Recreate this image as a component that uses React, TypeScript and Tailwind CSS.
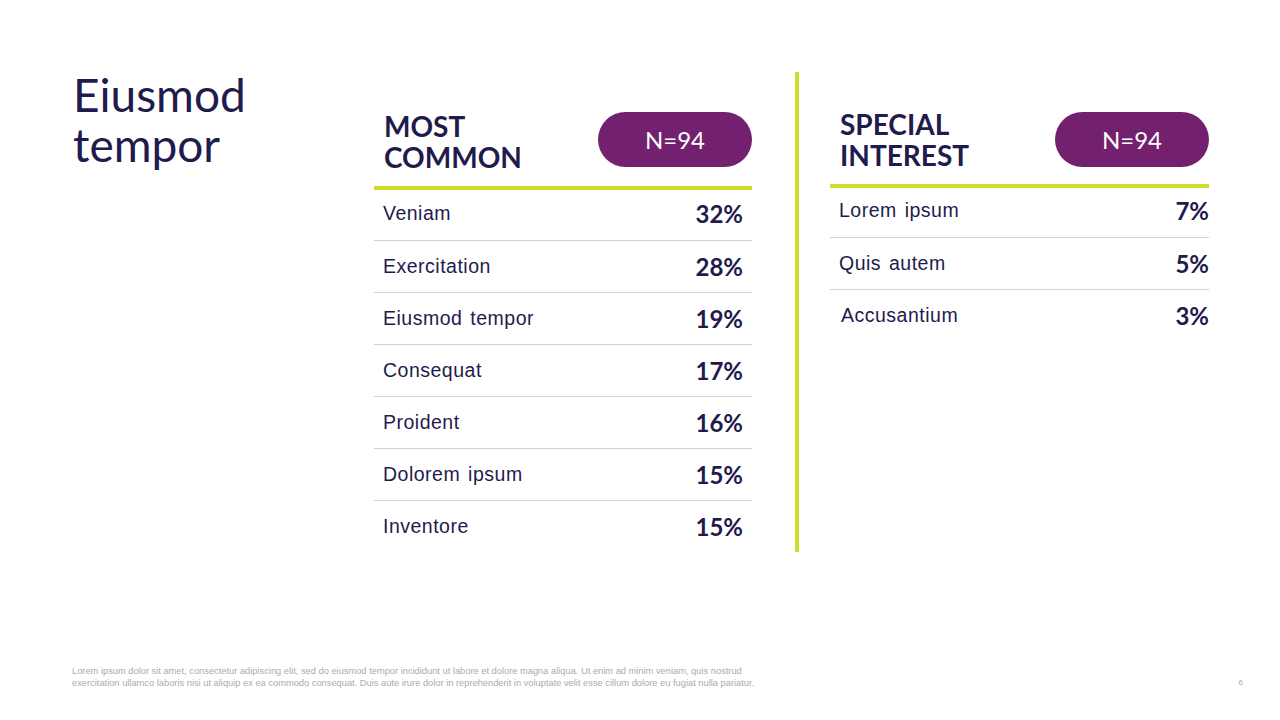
import React from 'react'

const mostCommon = [
  { label: 'Veniam', value: '32%' },
  { label: 'Exercitation', value: '28%' },
  { label: 'Eiusmod tempor', value: '19%' },
  { label: 'Consequat', value: '17%' },
  { label: 'Proident', value: '16%' },
  { label: 'Dolorem ipsum', value: '15%' },
  { label: 'Inventore', value: '15%' },
]

const specialInterest = [
  { label: 'Lorem ipsum', value: '7%' },
  { label: 'Quis autem', value: '5%' },
  { label: 'Accusantium', value: '3%', indent: true },
]

const heading = "font-['Lato',_'Open_Sans',_sans-serif]"
const body = "font-['Liberation_Sans',_Arial,_sans-serif]"

function Header({ lines, pillTop }: { lines: string[]; pillTop: string }) {
  return (
    <div className="flex items-start justify-between h-[77px]">
      <h2 className={`${heading} pl-[10px] pt-[2px] font-bold uppercase text-[28px] leading-[31px] text-[#1f1b4d]`}>
        {lines.map((l) => (
          <span key={l} className="block">{l}</span>
        ))}
      </h2>
      <div className={`${pillTop} flex h-[55px] w-[154px] items-center justify-center rounded-full bg-[#73206e]`}>
        <span className={`${heading} text-[24px] text-white`}>N=94</span>
      </div>
    </div>
  )
}

function Row({ label, value, first, padRight, indent }: { label: string; value: string; first?: boolean; padRight: string; indent?: boolean }) {
  return (
    <div className={`flex items-center justify-between h-[52px] ${first ? '' : 'border-t border-[#d2d2d2]'} pl-[9px] ${padRight}`}>
      <span className={`${body} text-[19.5px] tracking-[0.5px] [word-spacing:2px] text-[#1f1b4d] ${indent ? 'pl-[2px]' : ''}`}>{label}</span>
      <span className={`${heading} font-bold text-[24px] text-[#1f1b4d]`}>{value}</span>
    </div>
  )
}

export default function App() {
  return (
    <div className="h-[720px] w-[1280px] bg-white flex flex-col overflow-hidden">
      <div className="flex items-start pt-[70px]">
        <div className="w-[374px] pl-[73px]">
          <h1 className={`${heading} text-[46px] leading-[50px] text-[#1f1b4d]`}>
            Eiusmod
            <br />
            tempor
          </h1>
        </div>

        <section className="w-[378px] mt-[39px]">
          <Header lines={['Most', 'Common']} pillTop="mt-[3px]" />
          <div className="h-1 bg-[#cfdc2b]" />
          <div className="-mt-[2px]">
            {mostCommon.map((r, i) => (
              <Row key={r.label} {...r} first={i === 0} padRight="pr-[9px]" />
            ))}
          </div>
        </section>

        <div className="ml-[43px] mt-[2px] h-[480px] w-[4px] bg-[#cfdc2b]" />

        <section className="ml-[31px] w-[379px] mt-[37px]">
          <Header lines={['Special', 'Interest']} pillTop="mt-[5px]" />
          <div className="h-1 bg-[#cfdc2b]" />
          <div className="-mt-[3px]">
            {specialInterest.map((r, i) => (
              <Row key={r.label} {...r} first={i === 0} padRight="pr-0" />
            ))}
          </div>
        </section>
      </div>

      <footer className="mt-auto flex items-end justify-between pl-[72px] pr-[37px] pb-[31px]">
        <p className={`${body} text-[9.3px] leading-[12px] text-[#ababab]`}>
          Lorem ipsum dolor sit amet, consectetur adipiscing elit, sed do eiusmod tempor incididunt ut labore et dolore magna aliqua. Ut enim ad minim veniam, quis nostrud
          <br />
          exercitation ullamco laboris nisi ut aliquip ex ea commodo consequat. Duis aute irure dolor in reprehenderit in voluptate velit esse cillum dolore eu fugiat nulla pariatur.
        </p>
        <span className={`${body} text-[8px] leading-[12px] text-[#a8a8a8]`}>6</span>
      </footer>
    </div>
  )
}
